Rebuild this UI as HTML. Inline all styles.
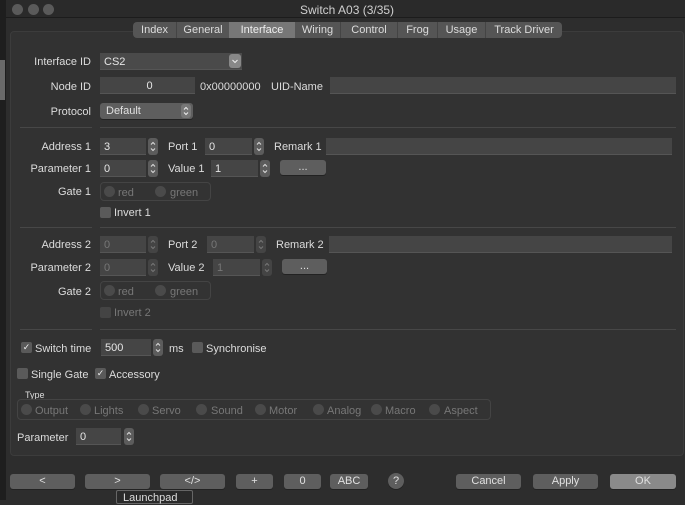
<!DOCTYPE html><html><head><style>
*{box-sizing:border-box;margin:0;padding:0}
body{width:685px;height:500px;background:#2d2d2d;font-family:"Liberation Sans",sans-serif;font-size:11px;color:#dcdcdc;position:relative;overflow:hidden}
.a{position:absolute}
.l{position:absolute;text-align:right;line-height:14px;margin-top:1px}
.t{position:absolute;line-height:14px;white-space:nowrap;margin-top:1px}
.f{position:absolute;height:17px;background:#454545;border-bottom:1px solid #555;line-height:18px;padding-left:4px;color:#e6e6e6}
.d{color:#777}
.s{position:absolute;width:10px;height:17px;background:#5c5c5c;border-radius:3px}
.s svg{display:block}
.b{position:absolute;height:15px;background:#5e5e5e;border-radius:3px;text-align:center;line-height:15px;color:#e0e0e0;box-shadow:0 1px 0 #222}
.cb{position:absolute;width:11px;height:11px;background:#5a5a5a;border-radius:2px;font-size:9px;line-height:11px;text-align:center;color:#eee}
.r{position:absolute;width:11px;height:11px;border-radius:50%;background:#4a4a4a}
.sep{position:absolute;height:1px;background:#474747}
.grp{position:absolute;border:1px solid #444;border-radius:4px;background:#333}
.dd{background:#444}
.dd svg path{stroke:#777}
</style></head><body>
<svg width="0" height="0" style="position:absolute"><defs><g id="ud"><path d="M3 6.5L5 4.5L7 6.5M3 10.5L5 12.5L7 10.5" fill="none" stroke="#ddd" stroke-width="1"/></g></defs></svg>
<div class="a" style="left:0;top:0;width:6px;height:500px;background:#1e1e1e"></div>
<div class="a" style="left:0;top:60px;width:5px;height:40px;background:#6a6a6a"></div>
<div class="a" style="left:6px;top:0;width:679px;height:18px;background:#2a2a2a;border-bottom:1px solid #1c1c1c"></div>
<div class="r" style="left:12px;top:4px;background:#5a5a5a"></div><div class="r" style="left:28px;top:4px;background:#5a5a5a"></div><div class="r" style="left:43px;top:4px;background:#5a5a5a"></div>
<div class="t" style="left:300px;top:2px;color:#cfcfcf;font-size:12px">Switch A03 (3/35)</div>
<div class="a" style="left:10px;top:31px;width:674px;height:425px;border:1px solid #3c3c3c;border-radius:4px;background:#323232"></div>
<div class="a" style="left:133px;top:22px;height:16px;display:flex;background:#555;border-radius:4px;overflow:hidden;line-height:17px">
<span style="width:43px;text-align:center">Index</span><span style="width:53px;text-align:center;border-left:1px solid #444">General</span><span style="width:66px;text-align:center;background:#777;color:#eee">Interface</span><span style="width:45px;text-align:center">Wiring</span><span style="width:57px;text-align:center;border-left:1px solid #444">Control</span><span style="width:40px;text-align:center;border-left:1px solid #444">Frog</span><span style="width:48px;text-align:center;border-left:1px solid #444">Usage</span><span style="width:77px;text-align:center;border-left:1px solid #444">Track Driver</span></div>

<div class="l" style="right:594px;top:54px">Interface ID</div>
<div class="f" style="left:100px;top:53px;width:142px;background:#4a4a4a">CS2</div><div class="s" style="left:229px;top:54px;width:12px;height:14px;background:#888"><svg width="12" height="14"><path d="M3.5 6L6 8.5L8.5 6" fill="none" stroke="#eee"/></svg></div>
<div class="l" style="right:594px;top:79px">Node ID</div>
<div class="f" style="left:100px;top:77px;width:95px;text-align:center">0</div>
<div class="t" style="left:200px;top:79px">0x00000000</div><div class="t" style="left:271px;top:79px">UID-Name</div>
<div class="f" style="left:330px;top:77px;width:346px"></div>
<div class="l" style="right:594px;top:104px">Protocol</div>
<div class="b" style="left:100px;top:103px;width:93px;height:16px;text-align:left;padding-left:6px;line-height:17px">Default</div><div class="s" style="left:181px;top:104px;height:14px;background:#777"><svg width="10" height="14"><path d="M3 5.5L5 3.5L7 5.5M3 8.5L5 10.5L7 8.5" fill="none" stroke="#eee"/></svg></div>
<div class="sep" style="left:20px;top:127px;width:72px"></div><div class="sep" style="left:100px;top:127px;width:576px"></div>

<div class="l" style="right:594px;top:139px">Address 1</div>
<div class="f" style="left:100px;top:138px;width:46px">3</div><div class="s" style="left:148px;top:138px"><svg width="10" height="17"><use href="#ud"/></svg></div>
<div class="t" style="left:168px;top:139px">Port 1</div>
<div class="f" style="left:205px;top:138px;width:47px">0</div><div class="s" style="left:254px;top:138px"><svg width="10" height="17"><use href="#ud"/></svg></div>
<div class="t" style="left:274px;top:139px">Remark 1</div>
<div class="f" style="left:326px;top:138px;width:346px"></div>
<div class="l" style="right:594px;top:161px">Parameter 1</div>
<div class="f" style="left:100px;top:160px;width:46px">0</div><div class="s" style="left:148px;top:160px"><svg width="10" height="17"><use href="#ud"/></svg></div>
<div class="t" style="left:168px;top:161px">Value 1</div>
<div class="f" style="left:211px;top:160px;width:47px">1</div><div class="s" style="left:260px;top:160px"><svg width="10" height="17"><use href="#ud"/></svg></div>
<div class="b" style="left:280px;top:160px;width:46px">...</div>
<div class="l" style="right:594px;top:184px">Gate 1</div>
<div class="grp" style="left:100px;top:182px;width:111px;height:19px"></div>
<div class="r" style="left:104px;top:186px"></div><div class="t d" style="left:118px;top:185px">red</div>
<div class="r" style="left:155px;top:186px"></div><div class="t d" style="left:170px;top:185px">green</div>
<div class="cb" style="left:100px;top:207px"></div><div class="t" style="left:114px;top:205px">Invert 1</div>
<div class="sep" style="left:20px;top:227px;width:72px"></div><div class="sep" style="left:100px;top:227px;width:576px"></div>

<div class="l" style="right:594px;top:237px">Address 2</div>
<div class="f d" style="left:100px;top:236px;width:46px">0</div><div class="s dd" style="left:148px;top:236px"><svg width="10" height="17"><path d="M3 6.5L5 4.5L7 6.5M3 10.5L5 12.5L7 10.5" fill="none" stroke="#777"/></svg></div>
<div class="t" style="left:168px;top:237px">Port 2</div>
<div class="f d" style="left:207px;top:236px;width:47px">0</div><div class="s dd" style="left:256px;top:236px"><svg width="10" height="17"><path d="M3 6.5L5 4.5L7 6.5M3 10.5L5 12.5L7 10.5" fill="none" stroke="#777"/></svg></div>
<div class="t" style="left:276px;top:237px">Remark 2</div>
<div class="f" style="left:329px;top:236px;width:343px"></div>
<div class="l" style="right:594px;top:260px">Parameter 2</div>
<div class="f d" style="left:100px;top:259px;width:46px">0</div><div class="s dd" style="left:148px;top:259px"><svg width="10" height="17"><path d="M3 6.5L5 4.5L7 6.5M3 10.5L5 12.5L7 10.5" fill="none" stroke="#777"/></svg></div>
<div class="t" style="left:168px;top:260px">Value 2</div>
<div class="f d" style="left:213px;top:259px;width:47px">1</div><div class="s dd" style="left:262px;top:259px"><svg width="10" height="17"><path d="M3 6.5L5 4.5L7 6.5M3 10.5L5 12.5L7 10.5" fill="none" stroke="#777"/></svg></div>
<div class="b" style="left:282px;top:259px;width:45px">...</div>
<div class="l" style="right:594px;top:284px">Gate 2</div>
<div class="grp" style="left:100px;top:281px;width:111px;height:19px"></div>
<div class="r" style="left:104px;top:285px"></div><div class="t d" style="left:118px;top:284px">red</div>
<div class="r" style="left:155px;top:285px"></div><div class="t d" style="left:170px;top:284px">green</div>
<div class="cb" style="left:100px;top:307px;background:#444"></div><div class="t d" style="left:114px;top:305px">Invert 2</div>
<div class="sep" style="left:20px;top:329px;width:72px"></div><div class="sep" style="left:100px;top:329px;width:576px"></div>

<div class="cb" style="left:21px;top:342px">✓</div><div class="t" style="left:35px;top:341px">Switch time</div>
<div class="f" style="left:101px;top:339px;width:50px">500</div><div class="s" style="left:153px;top:339px"><svg width="10" height="17"><use href="#ud"/></svg></div>
<div class="t" style="left:169px;top:341px">ms</div>
<div class="cb" style="left:192px;top:342px"></div><div class="t" style="left:206px;top:341px">Synchronise</div>
<div class="cb" style="left:17px;top:368px"></div><div class="t" style="left:31px;top:367px">Single Gate</div>
<div class="cb" style="left:95px;top:368px">✓</div><div class="t" style="left:109px;top:367px">Accessory</div>
<div class="t" style="left:25px;top:387px;font-size:9px">Type</div>
<div class="grp" style="left:17px;top:399px;width:474px;height:21px"></div>
<div class="r" style="left:21px;top:404px"></div><div class="t d" style="left:35px;top:403px">Output</div>
<div class="r" style="left:80px;top:404px"></div><div class="t d" style="left:94px;top:403px">Lights</div>
<div class="r" style="left:138px;top:404px"></div><div class="t d" style="left:152px;top:403px">Servo</div>
<div class="r" style="left:196px;top:404px"></div><div class="t d" style="left:211px;top:403px">Sound</div>
<div class="r" style="left:255px;top:404px"></div><div class="t d" style="left:269px;top:403px">Motor</div>
<div class="r" style="left:313px;top:404px"></div><div class="t d" style="left:327px;top:403px">Analog</div>
<div class="r" style="left:371px;top:404px"></div><div class="t d" style="left:385px;top:403px">Macro</div>
<div class="r" style="left:429px;top:404px"></div><div class="t d" style="left:444px;top:403px">Aspect</div>
<div class="t" style="left:17px;top:430px">Parameter</div>
<div class="f" style="left:76px;top:428px;width:45px">0</div><div class="s" style="left:124px;top:428px"><svg width="10" height="17"><use href="#ud"/></svg></div>

<div class="b" style="left:10px;top:474px;width:65px">&lt;</div>
<div class="b" style="left:85px;top:474px;width:65px">&gt;</div>
<div class="b" style="left:160px;top:474px;width:65px">&lt;/&gt;</div>
<div class="b" style="left:236px;top:474px;width:37px">+</div>
<div class="b" style="left:284px;top:474px;width:37px">0</div>
<div class="b" style="left:330px;top:474px;width:38px">ABC</div>
<div class="b" style="left:388px;top:473px;width:16px;height:16px;border-radius:50%;line-height:16px">?</div>
<div class="b" style="left:456px;top:474px;width:65px">Cancel</div>
<div class="b" style="left:533px;top:474px;width:65px">Apply</div>
<div class="b" style="left:610px;top:474px;width:66px;background:#8a8a8a">OK</div>
<div class="a" style="left:116px;top:490px;width:77px;height:14px;background:#2a2a2a;border:1px solid #666;border-radius:2px;padding-left:6px;line-height:14px;color:#ddd">Launchpad</div>
</body></html>
